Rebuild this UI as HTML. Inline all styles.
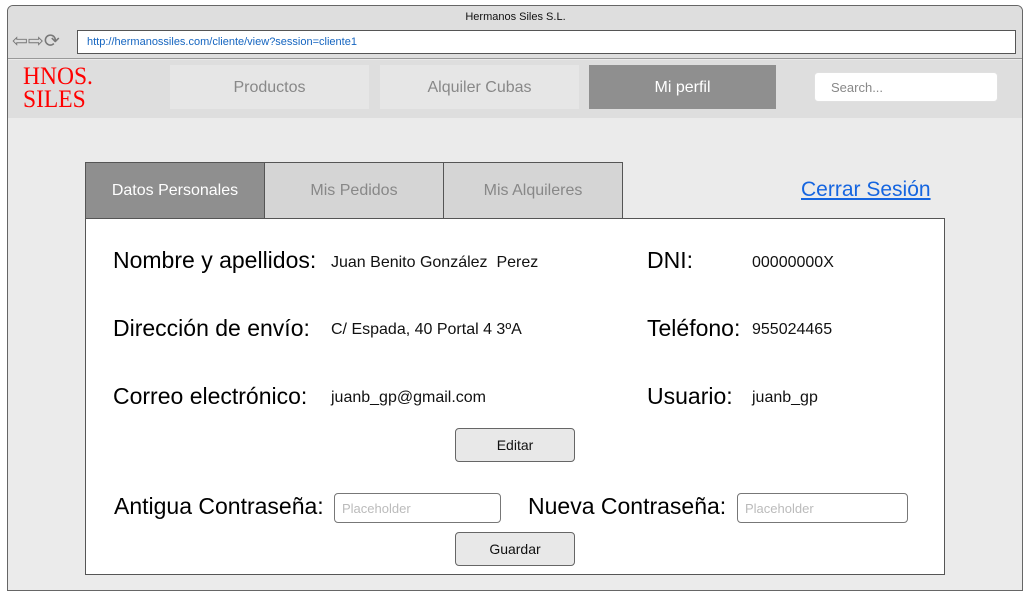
<!DOCTYPE html>
<html><head><meta charset="utf-8"><style>
*{margin:0;padding:0;box-sizing:border-box}
body{width:1031px;height:595px;background:#fff;font-family:"Liberation Sans",Arial,sans-serif;position:relative;overflow:hidden}
.a{position:absolute}
.c{display:flex;align-items:center;justify-content:center}
.lbl{position:absolute;font-size:23px;color:#000;white-space:nowrap}
.val{position:absolute;font-size:16px;color:#111;white-space:nowrap}
.btn{position:absolute;background:#e8e8e8;border:1px solid #666;border-radius:4px;font-size:14px;display:flex;align-items:center;justify-content:center;color:#111}
.inp{position:absolute;background:#fff;border:1px solid #777;border-radius:4px;font-size:13px;color:#bbb;padding-left:7px;display:flex;align-items:center}
</style></head><body>
<div class="a" style="left:7px;top:5px;width:1016px;height:586px;border:1px solid #666;border-radius:6px 6px 0 0;background:#ebebeb"></div>
<div class="a" style="left:8px;top:6px;width:1014px;height:53px;background:#dedede;border-radius:5px 5px 0 0;border-bottom:1px solid #999"></div>
<div class="a" style="left:0;top:11px;width:1031px;text-align:center;font-size:11px;color:#111">Hermanos Siles S.L.</div>
<div class="a" style="left:12px;top:30px;font-size:19px;color:#777">⇦⇨⟳</div>
<div class="a" style="left:77px;top:30px;width:939px;height:24px;background:#fff;border:1px solid #555;font-size:11px;color:#1565c0;padding-left:9px;line-height:22px">http://hermanossiles.com/cliente/view?session=cliente1</div>
<div class="a" style="left:8px;top:60px;width:1014px;height:58px;background:#dedede"></div>
<div class="a" style="left:23px;top:65px;font-family:'Liberation Serif',serif;color:#f00;font-size:24px;line-height:22px;transform:scale(0.98,1.05);transform-origin:0 0">HNOS.<br>SILES</div>
<div class="a c" style="left:170px;top:65px;width:199px;height:44px;background:#e6e6e6;color:#888;font-size:16px;padding-top:2px">Productos</div>
<div class="a c" style="left:380px;top:65px;width:199px;height:44px;background:#e6e6e6;color:#888;font-size:16px;padding-top:2px">Alquiler Cubas</div>
<div class="a c" style="left:589px;top:65px;width:187px;height:44px;background:#8f8f8f;color:#fff;font-size:16px;padding-top:2px">Mi perfil</div>
<div class="a" style="left:814px;top:72px;width:184px;height:30px;background:#fff;border:1px solid #e0e0e0;border-radius:4px;font-size:13px;color:#888;padding-left:16px;line-height:29px">Search...</div>
<div class="a c" style="left:85px;top:162px;width:180px;height:57px;background:#8f8f8f;border:1px solid #555;color:#fff;font-size:16px;padding-top:1px">Datos Personales</div>
<div class="a c" style="left:264px;top:162px;width:180px;height:57px;background:#d5d5d5;border:1px solid #555;color:#888;font-size:16px;padding-top:1px">Mis Pedidos</div>
<div class="a c" style="left:443px;top:162px;width:180px;height:57px;background:#d5d5d5;border:1px solid #555;color:#888;font-size:16px;padding-top:1px">Mis Alquileres</div>
<div class="a" style="left:801px;top:178px;font-size:21px;color:#1565e0;text-decoration:underline">Cerrar Sesión</div>
<div class="a" style="left:85px;top:218px;width:860px;height:357px;background:#fff;border:1px solid #555"></div>
<div class="lbl" style="left:113px;top:247px">Nombre y apellidos:</div>
<div class="val" style="left:331px;top:254px">Juan Benito González&nbsp; Perez</div>
<div class="lbl" style="left:647px;top:247px">DNI:</div>
<div class="val" style="left:752px;top:254px">00000000X</div>
<div class="lbl" style="left:113px;top:315px">Dirección de envío:</div>
<div class="val" style="left:331px;top:321px">C/ Espada, 40 Portal 4 3ºA</div>
<div class="lbl" style="left:647px;top:315px">Teléfono:</div>
<div class="val" style="left:752px;top:321px">955024465</div>
<div class="lbl" style="left:113px;top:383px">Correo electrónico:</div>
<div class="val" style="left:331px;top:389px">juanb_gp@gmail.com</div>
<div class="lbl" style="left:647px;top:383px">Usuario:</div>
<div class="val" style="left:752px;top:389px">juanb_gp</div>
<div class="btn" style="left:455px;top:428px;width:120px;height:34px">Editar</div>
<div class="lbl" style="left:114px;top:493px">Antigua Contraseña:</div>
<div class="inp" style="left:334px;top:493px;width:167px;height:30px">Placeholder</div>
<div class="lbl" style="left:528px;top:493px">Nueva Contraseña:</div>
<div class="inp" style="left:737px;top:493px;width:171px;height:30px">Placeholder</div>
<div class="btn" style="left:455px;top:532px;width:120px;height:34px">Guardar</div>
</body></html>
